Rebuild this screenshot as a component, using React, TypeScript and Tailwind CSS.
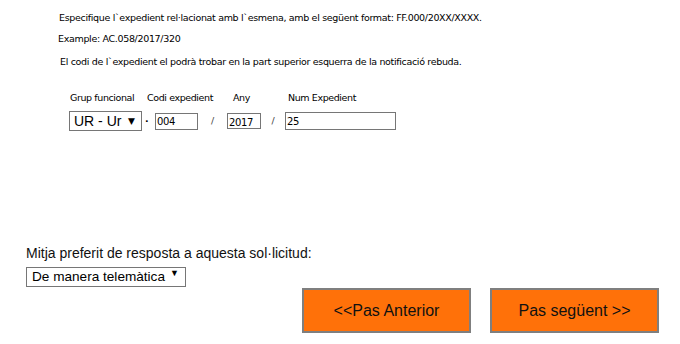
import { useState } from "react";

export default function App() {
  const [grup, setGrup] = useState("UR");
  const [mitja, setMitja] = useState("telematica");

  return (
    <div className="w-[680px] h-[344px] bg-white text-black overflow-hidden">
      {/* Instruccions */}
      <div className="pl-[59px] pt-[12px] font-['DejaVu_Sans',sans-serif] text-[9.5px] tracking-[-0.33px] leading-[12px]">
        <p>
          Especifique l`expedient rel·lacionat amb l`esmena, amb el següent
          format: FF.000/20XX/XXXX.
        </p>
        <p className="mt-[9px] -ml-px">Example: AC.058/2017/320</p>
        <p className="mt-[11px] ml-px">
          El codi de l`expedient el podrà trobar en la part superior esquerra
          de la notificació rebuda.
        </p>
      </div>

      {/* Codi expedient */}
      <div className="pl-[70px] pt-[24px] font-['DejaVu_Sans',sans-serif] text-[9.5px] tracking-[-0.4px] leading-[12px]">
        <div className="flex">
          <span className="w-[77px]">Grup funcional</span>
          <span className="w-[86px]">Codi expedient</span>
          <span className="w-[55px]">Any</span>
          <span>Num Expedient</span>
        </div>
        <div className="flex items-center mt-[7px] -ml-px">
          <select
            value={grup}
            onChange={(e) => setGrup(e.target.value)}
            className="w-[73px] h-[20px] border border-[#767676] pl-[4px] font-['Liberation_Sans',sans-serif] text-[14px] tracking-normal appearance-none bg-white"
          >
            <option value="UR">UR - Ur</option>
          </select>
          <span className="-ml-[14px] w-[14px] text-[9px] pointer-events-none">▼</span>
          <span className="ml-[3px] w-[10px] font-bold">·</span>
          <input
            defaultValue="004"
            className="w-[43px] h-[17px] border border-[#767676] px-[1px] text-[10px] outline-none"
          />
          <span className="w-[29px] text-center text-[#444]">/</span>
          <input
            defaultValue="2017"
            className="w-[34px] h-[16px] border border-[#767676] px-[1px] pt-[2px] text-[10px] outline-none"
          />
          <span className="w-[24px] text-center text-[#444]">/</span>
          <input
            defaultValue="25"
            className="w-[111px] h-[18px] border border-[#767676] px-[1px] text-[10px] outline-none"
          />
        </div>
      </div>

      {/* Mitja de resposta */}
      <div className="pl-[26px] pt-[114px] font-['Liberation_Sans',sans-serif]">
        <p className="text-[14px] leading-[16px] text-[#111]">
          Mitja preferit de resposta a aquesta sol·licitud:
        </p>
        <div className="relative w-[160px] mt-[3px]">
          <select
            value={mitja}
            onChange={(e) => setMitja(e.target.value)}
            className="w-[160px] h-[20px] border border-[#767676] pl-[5px] text-[13.6px] leading-[18px] appearance-none bg-white"
          >
            <option value="telematica">De manera telemàtica</option>
            <option value="paper">En paper</option>
          </select>
          <span className="absolute right-[7px] top-[3px] text-[9px] pointer-events-none">▼</span>
        </div>
      </div>

      {/* Navegació */}
      <div className="flex gap-[19px] pl-[302px] font-['Liberation_Sans',sans-serif]">
        <button className="w-[169px] h-[45px] bg-[#ff7109] border-2 border-[#7f7f7f] text-[16px] text-[#111]">
          &lt;&lt;Pas Anterior
        </button>
        <button className="w-[169px] h-[45px] bg-[#ff7109] border-2 border-[#7f7f7f] text-[16px] text-[#111]">
          Pas següent &gt;&gt;
        </button>
      </div>
    </div>
  );
}
